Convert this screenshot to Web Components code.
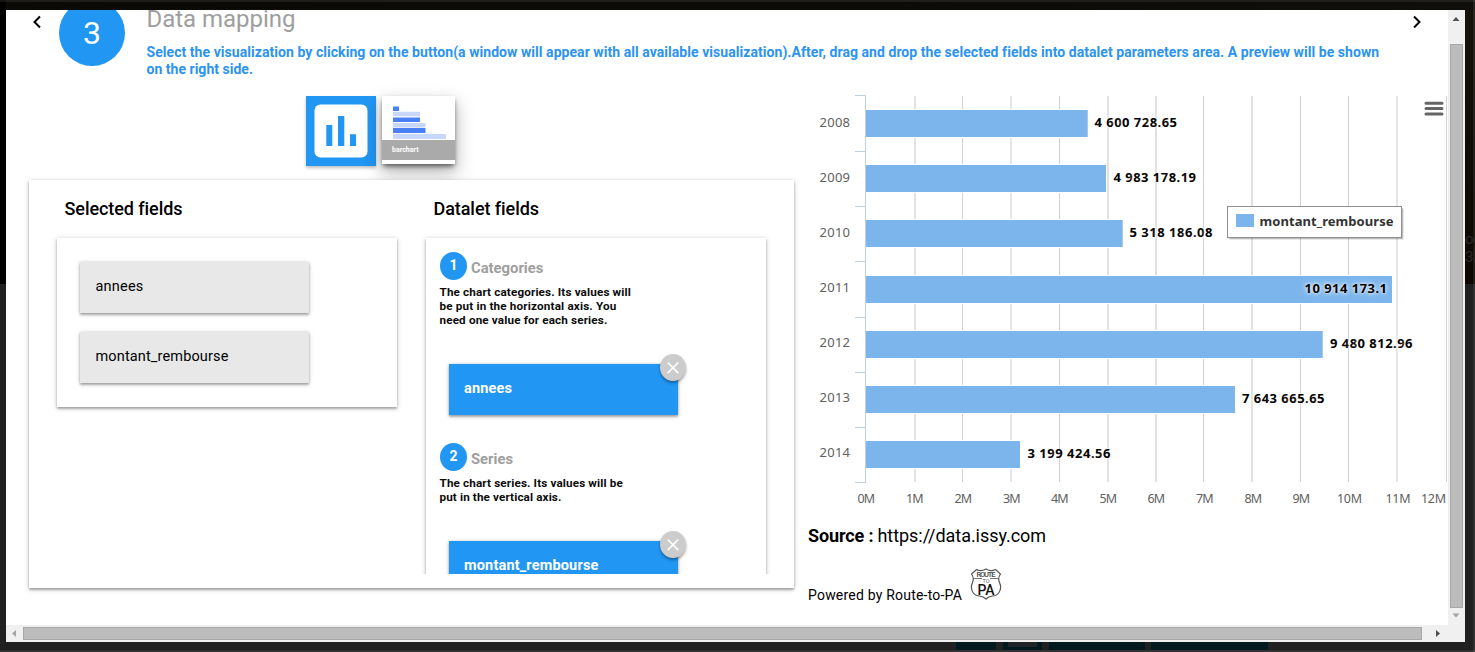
<!DOCTYPE html>
<html lang="en"><head><meta charset="utf-8"><title>Data mapping</title>
<style>html,body{margin:0;height:100%;overflow:hidden}body{font-family:Roboto,sans-serif;background:#202020}</style></head>
<body><page-backdrop><dialog-window>
<step-header slot="head" number="3"><fit-text slot="title" w="149">Data mapping</fit-text>
<fit-text slot="desc" w="1232.5">Select the visualization by clicking on the button(a window will appear with all available visualization).After, drag and drop the selected fields into datalet parameters area. A preview will be shown</fit-text>
<fit-text slot="desc" w="106.500">on the right side.</fit-text></step-header>
<mapping-area></mapping-area><datalet-preview></datalet-preview>
</dialog-window></page-backdrop>
<script>
function define(name, html, setup){
  customElements.define(name, class extends HTMLElement{
    connectedCallback(){
      if(this.shadowRoot) return;
      const r=this.attachShadow({mode:'open'});
      r.innerHTML=html;
      if(setup) setup(this,r);
    }
  });
}

/* Single-line text tracked out to the width given in its w attribute. */
define('fit-text','<style>:host{display:block;white-space:nowrap}span{display:inline-block}</style><span><slot></slot></span>',(el,r)=>{
  const s=r.querySelector('span');
  requestAnimationFrame(()=>{
    const n=el.textContent.trim().length, w=s.getBoundingClientRect().width;
    if(w) s.style.letterSpacing=((+el.getAttribute('w')-w)/n)+'px';
  });
});

define('page-backdrop',`<style>
:host{display:block;box-sizing:border-box;width:1475px;height:652px;padding:10px 0 0 6px;position:relative;overflow:hidden;
background:linear-gradient(#000,#000) 0 0/6px 284px no-repeat,linear-gradient(90deg,#0b0a07,#0d0b07 60%,#100e0a) 0 0/1475px 10px no-repeat,linear-gradient(#17140d,#100d07 150px,#0d0803) 100% 0/10px 284px no-repeat,#202020}
.e{position:absolute;background:#ffffff14}.t{left:0;right:0;top:0;height:2px}.r{top:0;bottom:0;right:0;width:2px}.b{left:0;right:0;bottom:0;height:2px}
.btn{position:absolute;top:642px;height:8px;background:#00191f}
.ghost{position:absolute;left:1465px;top:230px;width:10px;height:40px;overflow:hidden;color:#2c2a26;font:15px/18px Roboto,sans-serif}
</style><div class="e t"></div><div class="e r"></div><div class="e b"></div><div class="ghost">ou<br>3/</div>
<div class="btn" style="left:956px;width:40px"></div><div class="btn" style="left:1003px;width:39px"></div><div class="btn" style="left:1008px;width:29px;height:5px;background:#202527"></div><div class="btn" style="left:1049px;width:96px"></div><div class="btn" style="left:1151px;width:117px"></div><slot></slot>`);

define('scroll-bar',`<style>
:host{display:flex;align-items:center;background:#f0f0f0;box-sizing:border-box}
:host([dir-v]){flex-direction:column;width:17px;height:615px}
:host(:not([dir-v])){width:1442px;height:17px}
.a{display:flex;align-items:center;justify-content:center;flex:none;width:17px;height:17px}
.th{box-sizing:border-box;background:#bcbcbc;border:1px solid #a8a8a8}
:host([dir-v]) .th{width:13px;height:564px;margin-top:17px}
:host(:not([dir-v])) .th{width:1399px;height:13px}
:host(:not([dir-v])) .end{margin-left:8px}
</style><div class="a"><svg width="9" height="9"><path id="p1"/></svg></div><div class="th"></div><div class="a end"><svg width="9" height="9"><path id="p2"/></svg></div>`,(el,r)=>{
  const v=el.hasAttribute('dir-v'),a=r.querySelector('#p1'),b=r.querySelector('#p2');
  a.setAttribute('d',v?'M.5 7 4 3 7.500 7z':'M6 1 2 4.500 6 8z'); b.setAttribute('d',v?'M.5 1.500 4 5.500 7.500 1.500z':'M2 1 6 4.500 2 8z');
  a.setAttribute('fill',v?'#505050':'#a3a3a3'); b.setAttribute('fill',v?'#a3a3a3':'#505050');
});

define('dialog-window',`<style>
:host{display:grid;grid-template:615px 17px/1442px 17px;width:1459px;height:632px;background:#fff}
.c{overflow:hidden;min-width:0}.body{display:flex;align-items:flex-start}.k{background:#f0f0f0}
</style><div class="c"><slot name="head"></slot><div class="body"><slot></slot></div></div><scroll-bar dir-v></scroll-bar><scroll-bar></scroll-bar><div class="k"></div>`);

define('step-header',`<style>
:host{display:flex;height:86px;box-sizing:border-box}
.l{margin:4px 0 0 25px;flex:none}
.n{flex:none;width:66px;height:66px;margin:-10px 21.5px 0 18px;border-radius:50%;background:#2196f3;color:#fff;font-size:32px;line-height:66px;text-align:center}
.t{font-size:24px;line-height:28px;height:28px;color:#9e9e9e;margin-top:-5px}
.d{font-size:14px;line-height:17px;font-weight:700;color:#2c93f0;margin-top:11px}
.m{width:1261.500px;flex:none}
.r{flex:none;margin:4px 0 0 0}
</style><svg class="l" width="10" height="16"><path d="M9 2.500 3.500 8 9 13.500" fill="none" stroke="#000" stroke-width="2"/></svg><div class="n"></div>
<div class="m"><div class="t"><slot name="title"></slot></div><div class="d"><slot name="desc"></slot></div></div>
<svg class="r" width="16" height="16"><path d="M6 2.500 11.500 8 6 13.500" fill="none" stroke="#000" stroke-width="2"/></svg>`,(el,r)=>{r.querySelector('.n').textContent=el.getAttribute('number')});

define('field-item',`<style>
:host{display:block;box-sizing:border-box;width:229px;height:51px;padding:0 15.5px;font-size:14.500px;line-height:49px;background:#e8e8e8;color:#000;box-shadow:0 2px 2px 0 rgba(0,0,0,.24),0 1px 5px 0 rgba(0,0,0,.2),0 0 2px rgba(0,0,0,.1);position:relative}
:host([used]){background:#2196f3;color:#fff;font-weight:700;padding:0 15px}
.x{display:none}
:host([used]) .x{display:block;position:absolute;left:211px;top:-10px;width:26px;height:27px;border-radius:50%;background:#ccc;box-shadow:0 2px 3px rgba(0,0,0,.35)}
.x svg{display:block}
</style><slot></slot><div class="x"><svg width="26" height="27"><path d="M7.700 8.500l10.600 10.600M18.300 8.500 7.700 19.100" stroke="#fff" stroke-width="1.600"/></svg></div>`);

define('param-section',`<style>
:host{display:block;width:229px;height:191px}
.h{display:flex;height:28px}
.n{width:27px;height:28px;border-radius:50%;background:#2196f3;color:#fff;font:700 14px/27px Roboto,sans-serif;text-align:center;margin-right:4px}
.t{font-size:14.800px;font-weight:700;line-height:32px;color:#9e9e9e}
.d{font-size:11.700px;line-height:14px;font-weight:700;margin-top:5px;margin-left:-.5px;height:79px;color:#0c0c0c}
.f{margin-left:9px}
</style><div class="h"><div class="n"></div><div class="t"></div></div><div class="d"><slot name="desc"></slot></div><div class="f"><slot></slot></div>`,(el,r)=>{
r.querySelector('.n').textContent=el.getAttribute('number');r.querySelector('.t').textContent=el.getAttribute('label')});

define('mapping-area',`<style>
:host{display:block;width:765px;margin-left:23px;flex:none}
.top{display:flex;height:84px;padding-left:277px;align-items:flex-start}
.pick{width:70px;height:70px;background:#2196f3;box-shadow:0 2px 3px rgba(0,0,0,.25);margin-right:5.500px;flex:none}
svg{display:block}
.card{width:73.500px;height:68px;background:#fff;box-shadow:0 8px 17px 1px rgba(0,0,0,.28),0 3px 5px -1px rgba(0,0,0,.6)}
.lab{box-sizing:border-box;height:20px;margin-top:-24px;background:#aaa;color:#fff;font:700 7px/20px Roboto,sans-serif;padding-left:10.500px}
.panel{position:relative;box-sizing:border-box;width:765px;height:408px;background:#fff;display:flex;box-shadow:0 2px 2px 0 rgba(0,0,0,.25),0 1px 5px rgba(0,0,0,.24);padding:0 28px;gap:29px}
h2{margin:0 0 0 7.500px;font-size:18px;font-weight:500;line-height:58px;height:58px}
.box{box-sizing:border-box;width:340px;background:#fff;box-shadow:0 2px 2px 0 rgba(0,0,0,.24),0 1px 5px rgba(0,0,0,.24)}
.a{height:169px;padding:24px 23px;display:flex;flex-direction:column;gap:19px}
.clip{height:341px;margin:-5px -10px 0;padding:5px 10px 0;overflow:hidden;box-sizing:border-box}
.b{height:400px;padding:14px}
</style><div class="top"><div class="pick"><svg width="70" height="70"><rect x="8.500" y="8.500" width="53" height="53" rx="6" fill="#fff"/><path d="M20.300 29h6v21h-6zM32 20h6.300v30H32zM44 38.300h6V50h-6z" fill="#2196f3"/></svg></div>
<div class="card"><svg width="73" height="68"><path d="M11 10.500h6v4.500h-6zM11 21.500h27v4.500H11zM11 32h32.500v5H11z" fill="#4a80f5"/><path d="M11 15.800h27v4.500H11zM11 27h32.500v4.500H11zM11 38h53v5H11z" fill="#c6d7fb"/></svg><div class="lab">barchart</div></div></div>
<div class="panel"><div><h2><fit-text w="117.500">Selected fields</fit-text></h2><div class="box a"><field-item><fit-text w="48">annees</fit-text></field-item><field-item><fit-text w="133">montant_rembourse</fit-text></field-item></div></div>
<div><h2><fit-text w="105">Datalet fields</fit-text></h2><div class="clip"><div class="box b">
<param-section number="1" label="Categories"><div slot="desc"><fit-text w="191.500">The chart categories. Its values will</fit-text><fit-text w="177">be put in the horizontal axis. You</fit-text><fit-text w="168">need one value for each series.</fit-text></div><field-item used><fit-text w="48">annees</fit-text></field-item></param-section>
<param-section number="2" label="Series"><div slot="desc"><fit-text w="183.500">The chart series. Its values will be</fit-text><fit-text w="122">put in the vertical axis.</fit-text></div><field-item used style="margin-top:-14px"><fit-text w="134.500">montant_rembourse</fit-text></field-item></param-section>
</div></div></div></div>`);

define('bar-chart',`<style>:host{display:block;width:640px;height:420px}svg{display:block;font-family:"Noto Sans",sans-serif}</style>
<svg width="640" height="420" viewBox="808 96 640 420"></svg>`,(el,r)=>{
  let s='';
  [[914,2,'#e2e2e2'],[962,1,'#d2d2d2'],[1010,2,'#e6e6e6'],[1059,1,'#d0d0d0'],[1107,2,'#e2e2e2'],[1155,2,'#e0e0e0'],[1203,1,'#d2d2d2'],[1251,2,'#e0e0e0'],[1300,1,'#d2d2d2'],[1348,1,'#d0d0d0'],[1396,2,'#e6e6e6'],[1446,1,'#d2d2d2']].forEach(g=>s+=`<rect x="${g[0]}" y="96" width="${g[1]}" height="386" fill="${g[2]}"/>`);
  const D=[[2008,110,1087.7,'4 600 728.65',1094.5,82.5],[2009,165,1106,'4 983 178.19',1113.5,82.5],[2010,220,1122.7,'5 318 186.08',1129.5,83],[2011,276,1392,'10 914 173.1',1304.500,82.5],[2012,331,1322.7,'9 480 812.96',1330,82.5],[2013,386,1235,'7 643 665.65',1242,82.5],[2014,441,1020,'3 199 424.56',1027.5,83]];
  D.forEach(d=>s+=`<rect x="866" y="${d[1]-1}" width="${d[2]-865}" height="29" fill="#fff"/><rect x="866" y="${d[1]}" width="${d[2]-866}" height="27" fill="#7cb5ec"/>`);
  s+='<path d="M865.500 95V483" stroke="#c0d0e0"/>';
  [95,151,206,261,317,372,427,482].forEach(y=>s+=`<path d="M855 ${y+.5}H866" stroke="#c0d0e0"/>`);
  D.forEach((d,i)=>s+=`<text x="819.500" y="${127+i*55}" font-size="13" fill="#606060" textLength="30.500">${d[0]}</text><text x="${d[4]}" y="${127+i*55+(i>2?1:0)}" font-size="13" font-weight="700" textLength="${d[5]}" style="text-shadow:0 0 6px #fff,0 0 3px #fff">${d[3]}</text>`);
  [857.5,906,954.5,1003,1051,1099.5,1147.5,1196,1244.5,1292.5,1337,1385.5,1421].forEach((x,i)=>s+=`<text x="${x}" y="503" font-size="12.500" fill="#606060" textLength="${i>9?25:17.5}">${i}M</text>`);
  s+='<rect x="1229.500" y="208.500" width="174" height="31" fill="#000" opacity=".18"/><rect x="1228.500" y="207.500" width="174" height="31" fill="#000" opacity=".2"/><rect x="1227.500" y="206.500" width="174" height="31" fill="#fff" stroke="#909090"/><rect x="1236" y="214" width="18" height="13" fill="#7cb5ec"/><text x="1259.500" y="226" font-size="13" font-weight="700" fill="#333" textLength="134">montant_rembourse</text>';
  s+='<path d="M1426 103.200h16M1426 108.500h16M1426 114h16" stroke="#666" stroke-width="3" stroke-linecap="round"/>';
  const svg=r.querySelector('svg'); svg.style.overflow='visible'; svg.innerHTML=s;
});

define('route-badge',`<style>:host{display:block;width:32px;height:33px;margin:-.5px 0 0 -.5px}svg{display:block}</style>
<svg width="32" height="33" viewBox="0 0 32 33"><path d="M6.500 1.500Q11 4 16 1Q21 4 25.500 1.500L30.500 6Q27.500 10 29.500 14.500Q32 20 29 24.500Q26.500 28 22.500 28Q18.500 28.500 16 31Q13.500 28.500 9.500 28Q5.500 28 3 24.500Q0 20 2.500 14.500Q4.500 10 1.500 6Z" fill="#fff" stroke="#555" stroke-width="1.200"/><path d="M3.500 10.500H12M20 10.500h8.500" stroke="#777"/>
<g font-family="Roboto,sans-serif" fill="#444" text-anchor="middle"><text x="16" y="9" font-size="7.500" font-weight="500" textLength="19">ROUTE</text><text x="16" y="15" font-size="5.500" fill="#666">TO</text><text x="16" y="26.500" font-size="14" fill="#111" font-weight="500" textLength="17">PA</text></g></svg>`);

define('datalet-preview',`<style>
:host{display:block;width:640px;margin-left:14px;flex:none}
.s{display:flex;font-size:18px;line-height:24px;margin-top:8px;gap:4px}.s b{font-weight:700}
.p{display:flex;font-size:14px;margin-top:20px;height:33px}.p fit-text{line-height:18px;margin-top:18px;width:162px}
</style><bar-chart></bar-chart><div class="s"><fit-text w="65.500"><b>Source :</b></fit-text><fit-text w="168.500">https://data.issy.com</fit-text></div>
<div class="p"><fit-text w="154">Powered by Route-to-PA</fit-text><route-badge></route-badge></div>`);
</script></body></html>
